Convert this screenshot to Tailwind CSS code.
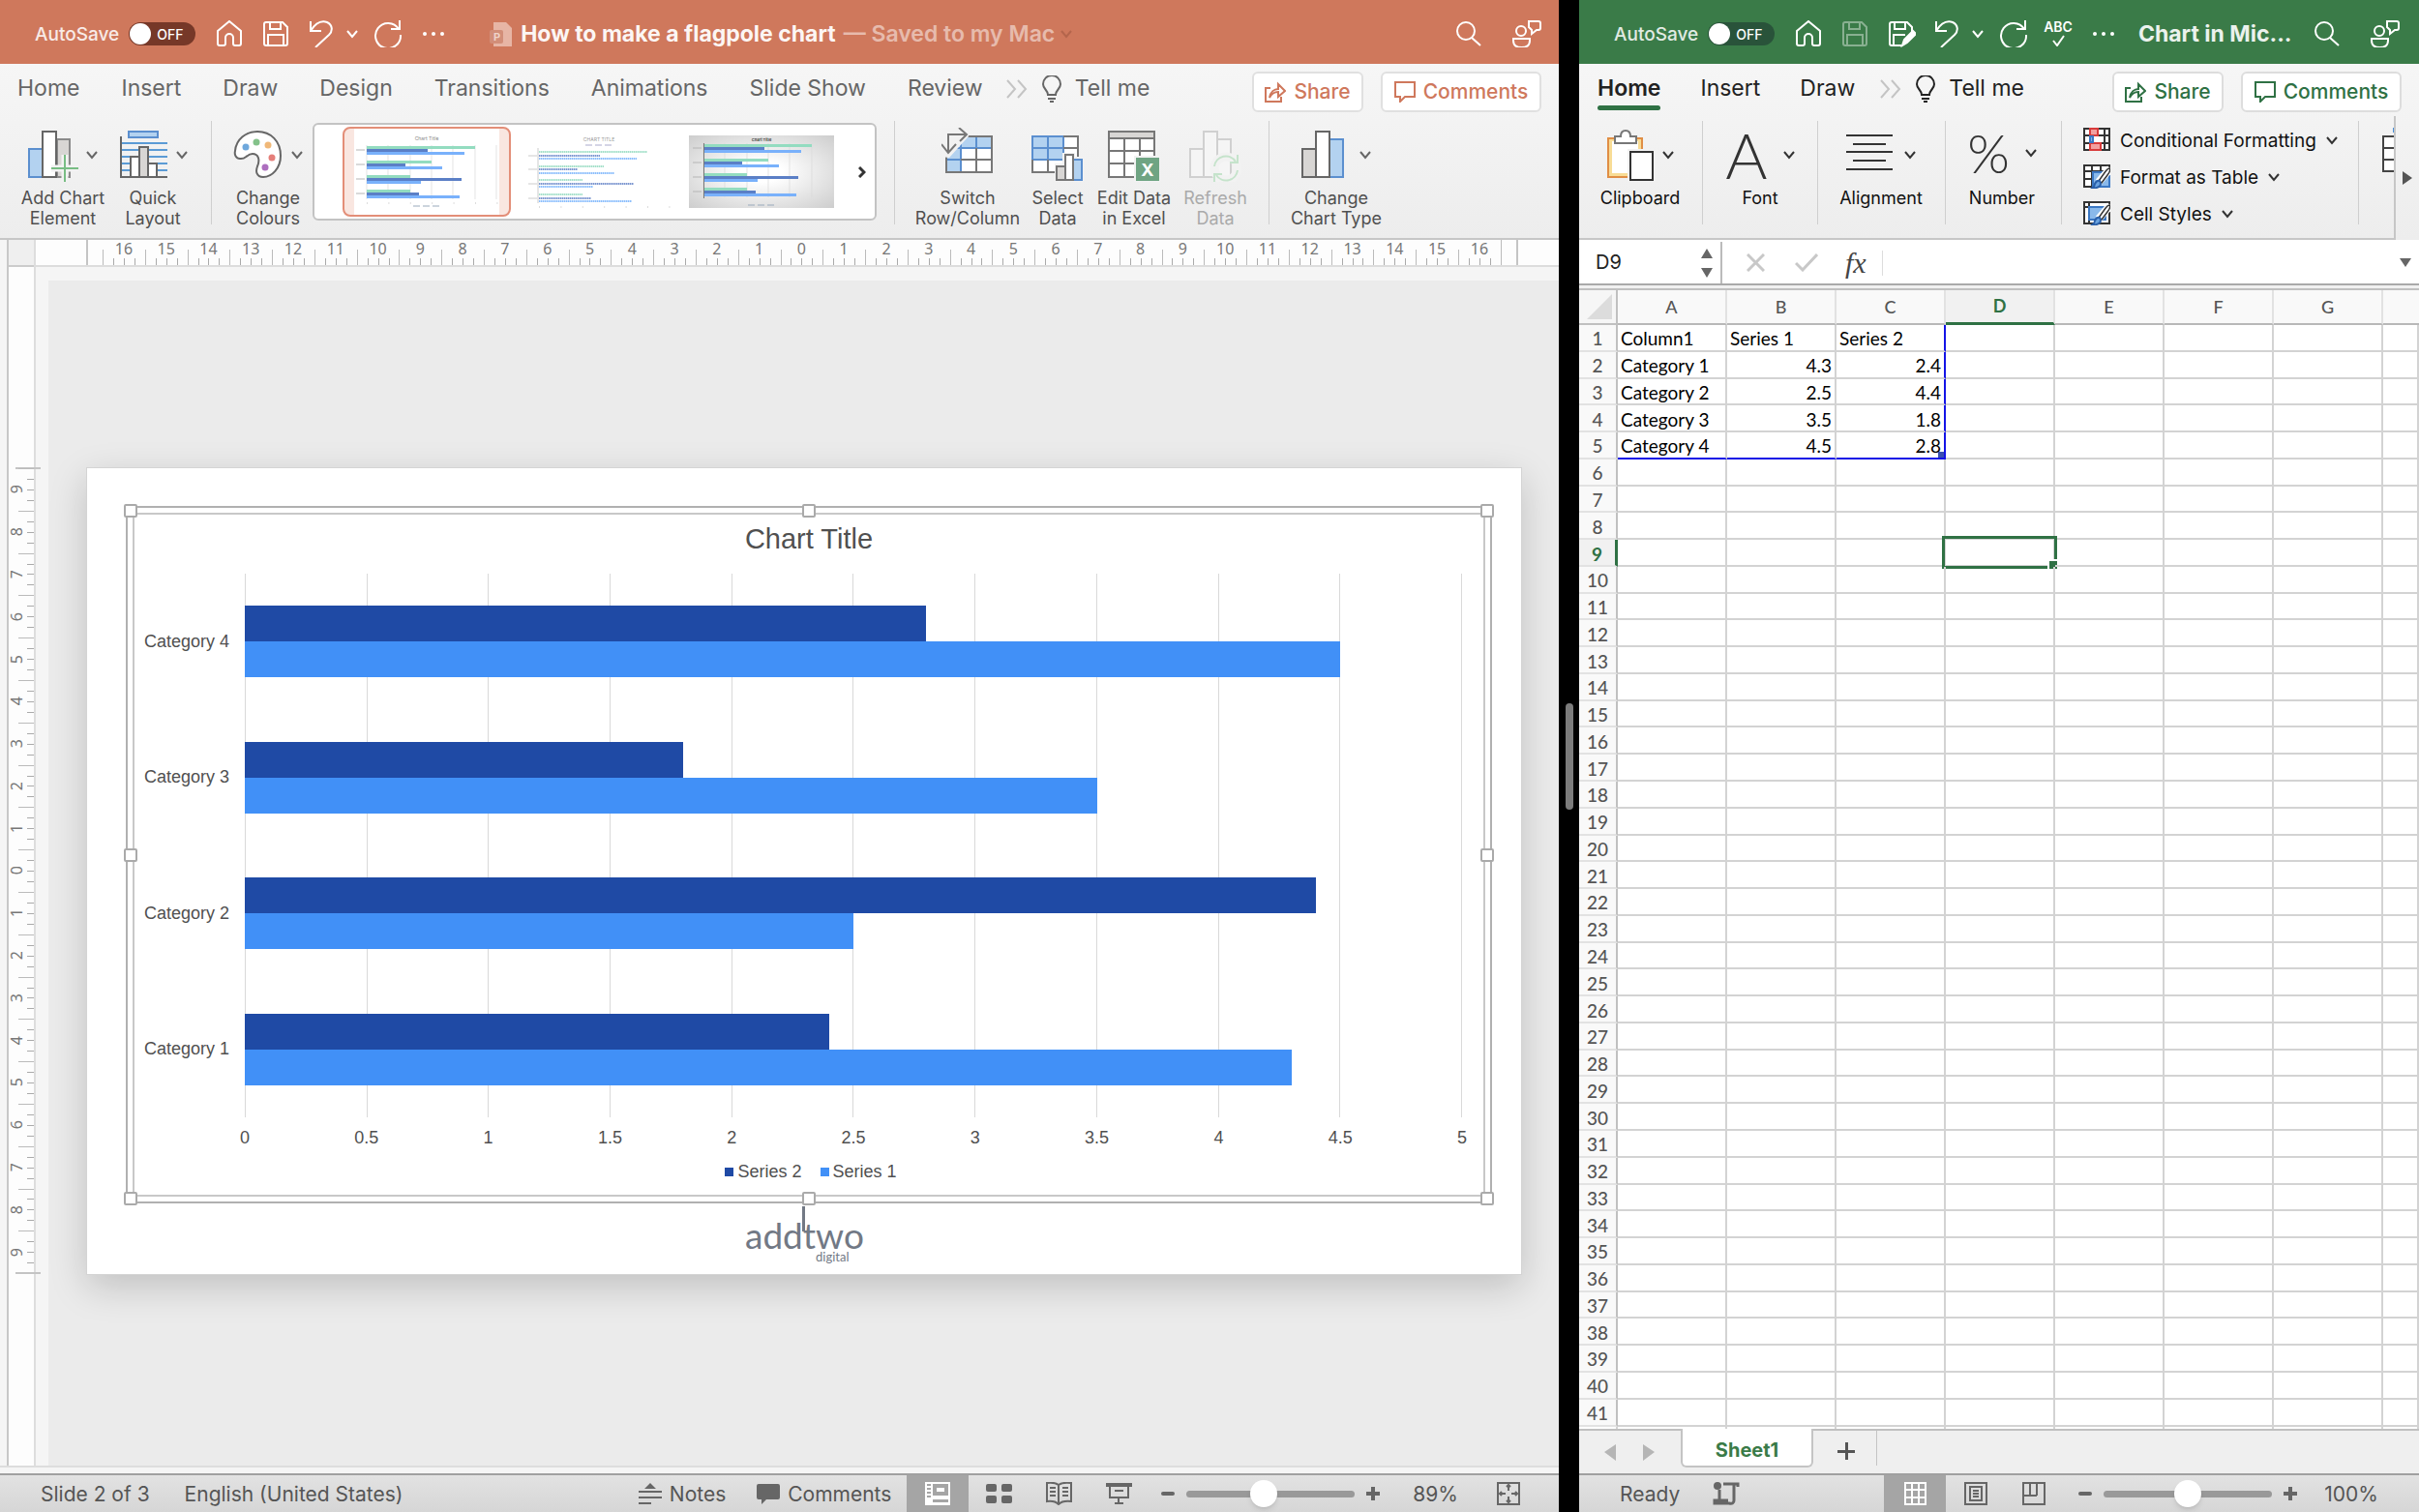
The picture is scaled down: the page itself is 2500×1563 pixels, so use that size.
<!DOCTYPE html>
<html lang="en">

<head>
  <meta charset="UTF-8" />
  <meta name="viewport" content="width=device-width, initial-scale=1.0" />
  <script src="https://cdn.jsdelivr.net/npm/@tailwindcss/browser@4"></script>
  <title>How to make a flagpole chart</title>
</head>

<body class="flex h-screen overflow-hidden bg-black font-['Inter','Liberation_Sans',sans-serif] text-[18px] leading-[21px]">

  <!-- Shared icons -->
  <svg class="hidden">
    <symbol id="i-home" viewBox="0 0 28 28"><path d="M1 11 13 1l12 10v13a2 2 0 0 1-2 2h-4a2 2 0 0 1-2-2v-6a4 4 0 0 0-8 0v6a2 2 0 0 1-2 2H3a2 2 0 0 1-2-2z" /></symbol>
    <symbol id="i-save" viewBox="0 0 28 28"><path d="M3 2h17l5 5v17a2 2 0 0 1-2 2H3a2 2 0 0 1-2-2V4a2 2 0 0 1 2-2zM7 2v7h11V2M5 26V15h16v11" /></symbol>
    <symbol id="i-saveas" viewBox="0 0 28 28"><path d="M13 26H3a2 2 0 0 1-2-2V4a2 2 0 0 1 2-2h16l5 5v5M6 2v7h11V2M5 26V15h12" /><path d="m14 26 2-6 9-9 3 3-9 9z" fill="currentColor" /></symbol>
    <symbol id="i-undo" viewBox="0 0 28 28"><path d="M1 1v10h11M1 11C6 3 12 0 18 2c6 3 6 9 2 13L6 28" /></symbol>
    <symbol id="i-redo" viewBox="0 0 30 28"><path d="M27 0v9h-9M26 9a13 13 0 1 0 2 6" /></symbol>
    <symbol id="i-search" viewBox="0 0 28 28"><circle cx="10" cy="11" r="9" /><path d="m16 18 9 8" /></symbol>
    <symbol id="i-people" viewBox="0 0 30 28"><circle cx="9" cy="11" r="5" /><path d="M1 19h17v2q0 7-8.500 7T1 21zM17 1h10q2 0 2 2v5q0 2-2 2h-2l-5 4v-4l-3-3V3q0-2 0-2z" /></symbol>
    <symbol id="i-chev" viewBox="0 0 12 9"><path d="m1 1 5 6 5-6" /></symbol>
    <symbol id="i-more" viewBox="0 0 24 20"><path d="m2 1 8 9-8 9M13 1l8 9-8 9" /></symbol>
    <symbol id="i-bulb" viewBox="0 0 20 28"><path d="M6 20c0-5-5-6-5-11a9 9 0 0 1 18 0c0 5-5 6-5 11zM6 24h8M8 27h4" /></symbol>
    <symbol id="i-share" viewBox="0 0 22 22"><path d="M6 7H1v14h16v-5M5 17c1-6 5-9 9-9V3l7 7-7 6v-5c-4 0-7 2-9 6z" /></symbol>
    <symbol id="i-comment" viewBox="0 0 22 22"><path d="M1 1h20v15H11l-5 5v-5H1z" /></symbol>
    <symbol id="i-brush" viewBox="0 0 28 24"><path fill="none" stroke="#fff" stroke-width="8" d="M28 3 16 17" /><path fill="#fff" stroke="#333" stroke-width="1.500" d="M27 3q2 2-2 7l-6 8-3-2 5-7q4-6 6-6z" /><path fill="#6aa3e0" stroke="#2a5fa8" d="M17 16q4 7-9 8 4-2 4-5 2-4 5-3z" /></symbol>
    <!-- bars of the style thumbnails -->
    <symbol id="thumb-bars" viewBox="0 0 150 58" overflow="visible">
      <path class="stroke-[#d9d9d9]" d="M0 0v56M22 0v56M45 0v56M67 0v56M89 0v56M112 0v56M134 0v56" stroke-width=".7" />
      <path fill="#93dcc0" d="M0 1h112v3H0zM0 16h67v3H0zM0 31h45v3H0zM0 46h45v3H0z" />
      <path fill="#5b7fc6" d="M0 4h63v3H0zM0 19h40v3H0zM0 34h98v3H0zM0 49h54v3H0z" />
      <path fill="#79b1fb" d="M0 7h101v3H0zM0 22h78v3H0zM0 37h56v3H0zM0 52h96v3H0z" />
      <path class="stroke-[#b5b5b5]" d="M-11 5h9M-11 20h9M-11 35h9M-11 50h9" stroke-width="1" />
    </symbol>
  </svg>

  <!-- PowerPoint -->
  <section class="flex min-w-0 flex-[1611] flex-col bg-[#f5f5f5]">
    <header class="flex h-[66px] shrink-0 items-center bg-[#cf785c] pt-1 pr-[18px] pl-9 text-white">
      <label class="flex items-center gap-2.5 text-[19px] font-medium text-white/85">AutoSave
        <input type="checkbox" class="sr-only" />
        <span class="flex h-6 w-[69px] items-center gap-1.5 rounded-full bg-[#763828] pl-px text-[14px] text-white"><span class="size-[22px] rounded-full bg-white"></span>OFF</span>
      </label>
      <div class="ml-[22px] flex items-center gap-5 fill-none stroke-white stroke-2">
        <button aria-label="Home"><svg class="size-7"><use href="#i-home" /></svg></button>
        <button aria-label="Save"><svg class="size-7"><use href="#i-save" /></svg></button>
        <button aria-label="Undo" class="flex items-center gap-2.5"><svg class="size-7"><use href="#i-undo" /></svg><svg class="h-[9px] w-3"><use href="#i-chev" /></svg></button>
        <button aria-label="Redo" class="-ml-1"><svg class="h-7 w-[30px]"><use href="#i-redo" /></svg></button>
        <button aria-label="More"><svg class="h-1 w-6 fill-white stroke-none"><circle cx="3" cy="2" r="2" /><circle cx="12" cy="2" r="2" /><circle cx="21" cy="2" r="2" /></svg></button>
      </div>
      <h1 class="ml-[46px] flex items-center text-[23px] font-bold text-white/95">
        <svg class="mr-2 h-[26px] w-6" viewBox="0 0 24 26"><path fill="#e7b5a5" d="M4 1h13l6 6v19H4z" /><rect y="9" width="14" height="14" rx="2" fill="#d28e79" /><text x="4" y="20" font-size="11" fill="#efd3c9">P</text></svg>
        How to make a flagpole chart<span class="ml-2 font-semibold text-white/50">— Saved to my Mac</span>
        <svg class="ml-1.5 h-[9px] w-3 fill-none stroke-[#b4654c] stroke-2"><use href="#i-chev" /></svg>
      </h1>
      <div class="ml-auto flex gap-[30px] fill-none stroke-white stroke-2">
        <button aria-label="Search"><svg class="size-7"><use href="#i-search" /></svg></button>
        <button aria-label="Account"><svg class="h-7 w-[30px]"><use href="#i-people" /></svg></button>
      </div>
    </header>

    <!-- Ribbon -->
    <div class="shrink-0 border-b-2 border-[#c6c6c6] bg-linear-to-b from-[#f6f6f6] to-[#ededed] text-[#505050]">
      <nav class="flex h-[54px] items-center gap-[43px] pr-[18px] pb-[3px] pl-[18px] text-[23px] text-[#666]">
        <button>Home</button>
        <button>Insert</button>
        <button>Draw</button>
        <button>Design</button>
        <button>Transitions</button>
        <button>Animations</button>
        <button>Slide Show</button>
        <button>Review</button>
        <button class="-ml-5 flex items-center gap-3.5"><svg class="h-5 w-6 fill-none stroke-[#c4c4c4] stroke-2"><use href="#i-more" /></svg><svg class="h-7 w-5 fill-none stroke-[#666] stroke-2"><use href="#i-bulb" /></svg><span>Tell me</span></button>
        <div class="ml-auto flex gap-[18px] pt-1.5 text-[21px] font-medium text-[#cf785c]">
          <button class="flex h-[42px] w-[115px] items-center justify-center gap-2 rounded-md border-2 border-[#e0e0e0] bg-white"><svg class="size-[22px] fill-none stroke-current stroke-2"><use href="#i-share" /></svg>Share</button>
          <button class="flex h-[42px] w-[166px] items-center justify-center gap-2 rounded-md border-2 border-[#e0e0e0] bg-white"><svg class="size-[22px] fill-none stroke-current stroke-2"><use href="#i-comment" /></svg>Comments</button>
        </div>
      </nav>

      <div class="flex h-[126px] items-start pl-5">
        <div class="mt-3 flex gap-3">
          <button class="flex w-[90px] flex-col items-center gap-1.5">
            <span class="flex items-center gap-2"><svg class="h-14 w-[52px] stroke-[#666] stroke-2" viewBox="0 0 52 56"><path fill="#b3d2f0" stroke="#5b8fcf" d="M1 22h14v29H1z" /><path fill="#d8d6d4" stroke="#8a8a8a" d="M30 12h13v39H30z" /><path fill="#fff" d="M15 4h14v47H15z" /><path fill="none" stroke="#f2f2f2" stroke-width="7" d="M38 28v28M24 42h28" /><path fill="none" stroke="#79bd84" d="M38 28v28M24 42h28" /></svg><svg class="h-[9px] w-3 fill-none stroke-[#666] stroke-2"><use href="#i-chev" /></svg></span>
            Add Chart<br>Element
          </button>
          <button class="flex w-[72px] flex-col items-center gap-1.5">
            <span class="flex items-center gap-2"><svg class="h-14 w-[52px] stroke-[#666] stroke-2" viewBox="0 0 52 56"><path stroke="#5b9bd5" d="M3 16h48M3 23h48M3 30h48M3 37h48M3 44h48" /><path fill="#b3d2f0" stroke="#5b8fcf" d="M11 4h30v6H11z" /><path fill="none" d="M3 9v42h48" /><path fill="#fff" d="M13 30h9v21h-9zM31 37h9v14h-9z" /><path fill="#d8d6d4" d="M22 20h9v31h-9z" /></svg><svg class="h-[9px] w-3 fill-none stroke-[#666] stroke-2"><use href="#i-chev" /></svg></span>
            Quick<br>Layout
          </button>
        </div>
        <div class="mt-[5px] ml-6 h-[107px] w-px bg-[#cfcfcf]"></div>
        <button class="mt-3 ml-[22px] flex w-[72px] flex-col items-center gap-1.5">
          <span class="flex items-center gap-2"><svg class="h-14 w-[52px]" viewBox="0 0 52 56"><path fill="#fff" stroke="#666" stroke-width="2" d="M25 4c14 0 24 10 24 25 0 13-9 22-18 22-7 0-8-6-6-11 3-7 1-13-5-13s-7 6-13 5c-4 0-6-4-5-8C3 12 13 4 25 4z" /><circle cx="13" cy="20" r="3.500" fill="#6fa8dc" /><circle cx="24" cy="15" r="3.500" fill="#84c28a" /><circle cx="36" cy="18" r="3.500" fill="#f0b878" /><circle cx="40" cy="31" r="3.500" fill="#e57f7a" /><circle cx="33" cy="41" r="3.500" fill="#ad6fbf" /></svg><svg class="h-[9px] w-3 fill-none stroke-[#666] stroke-2"><use href="#i-chev" /></svg></span>
          Change<br>Colours
        </button>

        <!-- Chart styles -->
        <div class="mt-[7px] ml-[10px] flex h-[101px] w-[583px] items-center rounded-md border-2 border-[#c3c3c3] bg-white pl-[29px]">
          <button aria-label="Style 1" class="h-[93px] w-[174px] rounded-lg border-2 border-[#e38e78] bg-[#f9e6e0] px-2.5">
            <svg class="h-full w-full bg-white" viewBox="0 0 150 89"><text x="75" y="12" text-anchor="middle" font-size="5" fill="#888">Chart Title</text><use href="#thumb-bars" x="13" y="17" width="150" height="58" /><path stroke="#bbb" stroke-dasharray="1 21.400" d="M13 77h136" /><path stroke="#9ab" stroke-dasharray="7 3" d="M61 80h29" /></svg>
          </button>
          <button aria-label="Style 2" class="ml-4">
            <svg class="h-[89px] w-[150px]" viewBox="0 0 150 89"><text x="75" y="13" text-anchor="middle" font-size="5" fill="#999">CHART TITLE</text><path stroke="#aac" stroke-dasharray="7 3" d="M61 17h29" /><g fill="none" stroke-width="2" stroke-dasharray="1.500 .5"><path stroke="#a5e0ca" d="M13 24h112M13 39h67M13 53h45M13 68h45" /><path stroke="#7d97d0" d="M13 28h63M13 42h40M13 57h98M13 72h54" /><path stroke="#8dbffc" d="M13 31h101M13 46h78M13 60h56M13 75h96" /></g><path stroke="#ccc" d="M12 20v57M2 28h9M2 42h9M2 57h9M2 72h9" /><path stroke="#bbb" stroke-dasharray="1 21.400" d="M13 81h136" /></svg>
          </button>
          <button aria-label="Style 3" class="ml-[18px] bg-radial from-white from-20% to-[#cdcdcd]">
            <svg class="h-[75px] w-[150px]" viewBox="0 0 150 75"><text x="75" y="6" text-anchor="middle" font-size="4" font-weight="bold" fill="#444">Chart Title</text><use href="#thumb-bars" x="15" y="8" width="150" height="58" /><path stroke="#777" d="M15.500 8v57" /><path stroke="#9ab" stroke-dasharray="7 3" d="M61 72h29" /></svg>
          </button>
          <button aria-label="More styles" class="mr-[9px] ml-auto"><svg class="h-3 w-2 fill-none stroke-[#333] stroke-3" viewBox="0 0 8 12"><path d="m1 1 5 5-5 5" /></svg></button>
        </div>

        <div class="mt-[5px] ml-[18px] h-[107px] w-px bg-[#cfcfcf]"></div>
        <div class="mt-3 ml-5 flex gap-2">
          <button class="flex w-[110px] flex-col items-center gap-1.5">
            <svg class="h-14 w-[54px] fill-none stroke-[#777] stroke-2" viewBox="0 0 54 56"><path fill="#fff" d="M5 9h47v37H5z" /><path fill="#b3d2f0" stroke="none" d="M5 9h47v12H20v25H5z" /><path stroke="#5b8fcf" d="M20 9v37M5 21h47M36 9v12M5 33h15" /><path d="M36 21v25M20 33h32M5 9h47v37H5z" /><path fill="#f2f2f2" stroke="none" d="M0 0h28v9L8 31 0 30z" /><path d="M7 25V7h18M18 0l8 7-7 7M0 17l7 9 8-9" /></svg>
            Switch<br>Row/Column
          </button>
          <button class="flex w-[60px] flex-col items-center gap-1.5">
            <svg class="h-14 w-[54px] fill-none stroke-[#777] stroke-2" viewBox="0 0 54 56"><path fill="#fff" d="M1 9h47v37H1z" /><path fill="#b3d2f0" stroke="#5b8fcf" d="M1 9h32v24H1zM17 9v24M1 21h32" /><path d="M17 33v13M33 21h15M33 9h15v37H1V33M33 33h15" /><path fill="#f2f2f2" stroke="none" d="M24 37h8V26h13v4h9v26H24z" /><path fill="#d8d6d4" d="M26 40h9v14h-9z" /><path fill="#b3d2f0" stroke="#5b8fcf" d="M43 33h9v21h-9z" /><path fill="#fff" d="M35 28h8v26h-8z" /></svg>
            Select<br>Data
          </button>
          <button class="flex w-[82px] flex-col items-center gap-1.5">
            <svg class="h-14 w-[54px] fill-none stroke-[#777] stroke-2" viewBox="0 0 54 56"><path fill="#fff" d="M1 4h47v47H1z" /><path fill="#d8d6d4" d="M1 4h47v7H1z" /><path d="M17 11v40M33 11v40M1 24h47M1 37h47" /><path fill="#6fa483" stroke="#f2f2f2" d="M28 30h26v26H28z" /><text x="41" y="50" text-anchor="middle" font-size="18" font-weight="bold" fill="#fff" stroke="none">X</text></svg>
            Edit Data<br>in Excel
          </button>
          <button class="flex w-[70px] flex-col items-center gap-1.5 text-[#aaa]">
            <svg class="h-14 w-[54px] fill-none stroke-[#d0d0d0] stroke-2" viewBox="0 0 54 56"><path fill="#f5f5f5" d="M1 22h14v29H1zM29 12h14v39H29zM15 4h14v47H15z" /><path stroke="#f2f2f2" stroke-width="9" d="M26 42a12 12 0 0 1 24 0 12 12 0 0 1-24 0" /><path stroke="#c5e3cb" d="M26 40a12 12 0 0 1 22-5M50 44a12 12 0 0 1-22 5M50 28v8h-8M26 56v-8h8" /></svg>
            Refresh<br>Data
          </button>
        </div>
        <div class="mt-[5px] ml-5 h-[107px] w-px bg-[#cfcfcf]"></div>
        <button class="mt-3 ml-5 flex w-[98px] flex-col items-center gap-1.5">
          <span class="flex items-center gap-2"><svg class="h-14 w-[52px] stroke-[#666] stroke-2" viewBox="0 0 52 56"><path fill="#d8d6d4" d="M1 22h14v29H1z" /><path fill="#b3d2f0" stroke="#5b8fcf" d="M29 12h14v39H29z" /><path fill="#fff" d="M15 4h14v47H15z" /></svg><svg class="h-[9px] w-3 fill-none stroke-[#666] stroke-2"><use href="#i-chev" /></svg></span>
          Change<br>Chart Type
        </button>
      </div>
    </div>

    <div class="flex min-h-0 flex-1 border-b-2 border-[#ddd]">
      <!-- Vertical ruler -->
      <div class="w-[9px] shrink-0 border-r-2 border-[#c8c8c8]"></div>
      <div class="w-7 shrink-0 border-r-2 border-[#ddd] bg-[#fdfdfd]">
        <div class="h-7 border-b-2 border-[#ccc] bg-[#efefef]"></div>
        <div id="vruler" class="relative mt-[208px] flex h-[832px] flex-col font-['Noto_Sans',sans-serif] text-[16px] leading-4 text-[#777]">
          <i class="absolute -top-px left-[7px] h-0.5 w-[26px] bg-[#c4c4c4]"></i>
          <i class="absolute -bottom-px left-[7px] h-0.5 w-[26px] bg-[#c4c4c4]"></i>
        </div>
      </div>
      <div class="flex min-w-0 flex-1 flex-col">
        <!-- Horizontal ruler -->
        <div class="h-7 shrink-0 border-b-2 border-[#ddd] bg-[#fdfdfd] pr-[42px] pl-[52px]">
          <div id="hruler" class="flex h-full border-x-2 border-[#c4c4c4] px-[15px] font-['Noto_Sans',sans-serif] text-[16px] leading-4 text-[#777]"></div>
        </div>
        <!-- Slide area -->
        <main class="mt-[14px] ml-[13px] flex-1 bg-[#ebebeb] pt-[193px] pr-[38px] pl-[39px]">
          <div class="relative aspect-[1484/835] w-full border border-[#d4d4d4] bg-white shadow-[0_12px_36px_rgba(0,0,0,0.18)]">
            <!-- Selected chart -->
            <div class="absolute top-[39px] right-[30px] bottom-[73px] left-10 border-2 border-[#b0b0b0] bg-white p-[5px]">
              <div class="flex h-full flex-col border-2 border-[#c8c8c8] pt-[9px] pr-[22px] pl-[114px] font-['Liberation_Sans',Arial,sans-serif] text-[18px] text-[#505050]">
                <h2 class="mr-[92px] text-center text-[29px] leading-8">Chart Title</h2>
                <div id="plot" class="relative mt-5 flex h-[562px] flex-col">
                  <div class="absolute inset-0 flex justify-between">
                    <i class="w-px bg-[#d9d9d9]"></i><i class="w-px bg-[#d9d9d9]"></i><i class="w-px bg-[#d9d9d9]"></i><i class="w-px bg-[#d9d9d9]"></i><i class="w-px bg-[#d9d9d9]"></i><i class="w-px bg-[#d9d9d9]"></i><i class="w-px bg-[#d9d9d9]"></i><i class="w-px bg-[#d9d9d9]"></i><i class="w-px bg-[#d9d9d9]"></i><i class="w-px bg-[#d9d9d9]"></i><i class="w-px bg-[#d9d9d9]"></i>
                  </div>
                </div>
                <div id="axis" class="mt-[11px] flex justify-between"></div>
                <div class="mt-3.5 mr-[88px] flex justify-center gap-[19px]">
                  <span class="flex items-center gap-1"><i class="size-[9px] bg-[#1f4aa5]"></i>Series 2</span>
                  <span class="flex items-center gap-1"><i class="size-[9px] bg-[#4190f7]"></i>Series 1</span>
                </div>
              </div>
              <i class="absolute -top-1 -left-1 size-3.5 rounded-xs border-2 border-[#aaa] bg-white"></i>
              <i class="absolute -top-1 left-1/2 size-3.5 -translate-x-1/2 rounded-xs border-2 border-[#aaa] bg-white"></i>
              <i class="absolute -top-1 -right-1 size-3.5 rounded-xs border-2 border-[#aaa] bg-white"></i>
              <i class="absolute top-1/2 -left-1 size-3.5 -translate-y-1/2 rounded-xs border-2 border-[#aaa] bg-white"></i>
              <i class="absolute top-1/2 -right-1 size-3.5 -translate-y-1/2 rounded-xs border-2 border-[#aaa] bg-white"></i>
              <i class="absolute -bottom-1 -left-1 size-3.5 rounded-xs border-2 border-[#aaa] bg-white"></i>
              <i class="absolute -bottom-1 left-1/2 size-3.5 -translate-x-1/2 rounded-xs border-2 border-[#aaa] bg-white"></i>
              <i class="absolute -right-1 -bottom-1 size-3.5 rounded-xs border-2 border-[#aaa] bg-white"></i>
            </div>
            <!-- Logo -->
            <svg class="absolute bottom-2 left-[680px] h-[64px] w-[126px] font-['Lato',sans-serif]" viewBox="0 0 126 64" fill="#727985"><text y="46" font-size="37">addtwo</text><path d="M59 2h3v26h-3z" /><text x="73" y="59" font-size="13">digital</text></svg>
          </div>
        </main>
      </div>
    </div>

    <!-- Status bar -->
    <footer class="mt-1.5 flex h-10 shrink-0 items-center border-t-2 border-[#a0a0a0] bg-linear-to-b from-[#e2e2e2] to-[#d6d6d6] pr-10 pl-[42px] text-[21px] text-[#555]">
      <span>Slide 2 of 3</span>
      <span class="ml-9">English (United States)</span>
      <button class="ml-auto flex items-center gap-2"><svg class="h-6 w-6 fill-[#666]" viewBox="0 0 24 24"><path d="M12 1l6 6H6zM0 9h24v2H0zM0 15h24v2H0zM0 21h13v2H0z" /></svg>Notes</button>
      <button class="ml-8 flex items-center gap-2"><svg class="h-6 w-6 fill-[#666]" viewBox="0 0 24 24"><path d="M2 2h20q2 0 2 2v12q0 2-2 2H10l-5 5v-5H2q-2 0-2-2V4q0-2 2-2z" /></svg>Comments</button>
      <button aria-label="Normal" class="ml-4 flex h-full w-16 items-center justify-center bg-[#a5a5a5]"><svg class="h-6 w-[26px]" viewBox="0 0 26 24"><path fill="#fff" d="M0 0h26v24H0z" /><path fill="#a5a5a5" d="M2 2h4v2H2zM2 6h4v2H2zM2 10h4v2H2zM2 14h4v2H2zM8 2h16v12H8zM8 18h16v3H8z" /><path fill="#fff" d="M12 6h8v4h-8z" /></svg></button>
      <div class="ml-[18px] flex items-center gap-[35px] fill-[#666] stroke-[#666]">
        <button aria-label="Slide sorter"><svg class="h-5 w-[27px] stroke-none" viewBox="0 0 27 20"><rect width="11" height="8" rx="2" /><rect x="16" width="11" height="8" rx="2" /><rect y="12" width="11" height="8" rx="2" /><rect x="16" y="12" width="11" height="8" rx="2" /></svg></button>
        <button aria-label="Reading view"><svg class="h-6 w-[27px] fill-none stroke-2" viewBox="0 0 27 24"><path d="M13 3Q9 0 1 1v19q8-1 12 3 4-4 13-3V1q-9-1-13 2zv20M4 6h6M4 10h6M4 14h6M17 6h6M17 10h6M17 14h6" /></svg></button>
        <button aria-label="Slide show"><svg class="h-6 w-[27px] fill-none stroke-2" viewBox="0 0 27 24"><path d="M1 2h25v2H1zM4 4v12h19V4M9 9h9M13 16v6M9 22h9" /></svg></button>
      </div>
      <button aria-label="Zoom out" class="ml-[30px] h-1 w-3.5 rounded bg-[#666]"></button>
      <input type="range" aria-label="Zoom" min="0" max="100" value="45" class="mx-3 h-[7px] w-[174px] appearance-none rounded-full bg-[#999] [&::-webkit-slider-thumb]:size-7 [&::-webkit-slider-thumb]:appearance-none [&::-webkit-slider-thumb]:rounded-full [&::-webkit-slider-thumb]:bg-white [&::-webkit-slider-thumb]:shadow-md" />
      <button aria-label="Zoom in"><svg class="size-3.5 fill-[#666]" viewBox="0 0 14 14"><path d="M5 0h4v5h5v4H9v5H5V9H0V5h5z" /></svg></button>
      <span class="ml-[34px]">89%</span>
      <button aria-label="Fit to window" class="ml-10"><svg class="size-6 fill-none stroke-[#666] stroke-2" viewBox="0 0 24 24"><path d="M1 1h22v22H1zM12 3v6M12 15v6M3 12h6M15 12h6M10 5l2-2 2 2M10 19l2 2 2-2M5 10l-2 2 2 2M19 10l2 2-2 2" /></svg></button>
    </footer>
  </section>

  <!-- Split handle -->
  <div class="flex w-[21px] shrink-0 items-center justify-center"><i class="h-[110px] w-2 rounded-full bg-[#7c7c7c]"></i></div>

  <!-- Excel -->
  <section class="flex min-w-0 flex-[868] flex-col bg-[#f1f1f1]">
    <header class="flex h-[66px] shrink-0 items-center bg-[#3a7b48] pt-1 pr-5 pl-9 text-white">
      <label class="flex items-center gap-2.5 text-[19px] font-medium text-white/85">AutoSave
        <input type="checkbox" class="sr-only" />
        <span class="flex h-6 w-[69px] items-center gap-1.5 rounded-full bg-[#29533a] pl-px text-[14px] text-white"><span class="size-[22px] rounded-full bg-white"></span>OFF</span>
      </label>
      <div class="ml-[22px] flex items-center gap-5 fill-none stroke-white stroke-2">
        <button aria-label="Home"><svg class="size-7"><use href="#i-home" /></svg></button>
        <button aria-label="Save" class="opacity-40"><svg class="size-7"><use href="#i-save" /></svg></button>
        <button aria-label="Save a copy"><svg class="size-7"><use href="#i-saveas" /></svg></button>
        <button aria-label="Undo" class="flex items-center gap-2.5"><svg class="size-7"><use href="#i-undo" /></svg><svg class="h-[9px] w-3"><use href="#i-chev" /></svg></button>
        <button aria-label="Redo" class="-ml-1"><svg class="h-7 w-[30px]"><use href="#i-redo" /></svg></button>
        <button class="-ml-1 flex flex-col items-center text-[14px] leading-3 font-semibold">ABC<svg class="mt-0.5 h-3 w-3.5" viewBox="0 0 14 12"><path d="m2 6 4 5 7-10" /></svg></button>
        <button aria-label="More"><svg class="h-1 w-6 fill-white stroke-none"><circle cx="3" cy="2" r="2" /><circle cx="12" cy="2" r="2" /><circle cx="21" cy="2" r="2" /></svg></button>
      </div>
      <h1 class="ml-6 text-[23px] font-bold whitespace-nowrap text-white/90">Chart in Mic...</h1>
      <div class="ml-auto flex gap-[30px] fill-none stroke-white stroke-2">
        <button aria-label="Search"><svg class="size-7"><use href="#i-search" /></svg></button>
        <button aria-label="Account"><svg class="h-7 w-[30px]"><use href="#i-people" /></svg></button>
      </div>
    </header>

    <!-- Ribbon -->
    <div class="shrink-0 bg-linear-to-b from-[#f6f6f6] to-[#ededed] text-[#111]">
      <nav class="flex h-[54px] items-center gap-[41px] pr-[18px] pb-[3px] pl-[19px] text-[23px] text-[#222]">
        <button class="relative font-semibold">Home<i class="absolute inset-x-0 -bottom-3 h-[5px] rounded-full bg-[#2f7144]"></i></button>
        <button>Insert</button>
        <button>Draw</button>
        <button class="-ml-4 flex items-center gap-3.5"><svg class="h-5 w-6 fill-none stroke-[#c4c4c4] stroke-2"><use href="#i-more" /></svg><svg class="h-7 w-5 fill-none stroke-[#222] stroke-2"><use href="#i-bulb" /></svg><span>Tell me</span></button>
        <div class="ml-auto flex gap-[18px] pt-1.5 text-[21px] font-medium text-[#2f7144]">
          <button class="flex h-[42px] w-[115px] items-center justify-center gap-2 rounded-md border-2 border-[#ddd] bg-white"><svg class="size-[22px] fill-none stroke-current stroke-2"><use href="#i-share" /></svg>Share</button>
          <button class="flex h-[42px] w-[166px] items-center justify-center gap-2 rounded-md border-2 border-[#ddd] bg-white"><svg class="size-[22px] fill-none stroke-current stroke-2"><use href="#i-comment" /></svg>Comments</button>
        </div>
      </nav>
      <div class="flex h-32 items-start">
        <div class="flex h-full min-w-0 flex-1 items-start overflow-hidden border-r-2 border-b-2 border-[#c6c6c6] pl-[21px]">
          <button class="mt-3 flex w-[84px] shrink-0 flex-col items-center gap-1.5">
            <span class="flex items-center gap-2"><svg class="h-14 w-[50px] stroke-[#555] stroke-2" viewBox="0 0 50 56"><path fill="#f8dc95" stroke="#e08e45" d="M2 11h35v40H2z" /><path fill="#fff" stroke="none" d="M6 14h27v33H6z" /><path fill="#fff" stroke="#777" d="M9 16V9h6q0-6 5-6t5 6h6v7z" /><path fill="#fff" stroke="#f2f2f2" stroke-width="6" d="M25 25h23v29H25z" /><path fill="#fff" stroke="#333" d="M25 25h23v29H25z" /></svg><svg class="h-[9px] w-3 fill-none stroke-[#333] stroke-2"><use href="#i-chev" /></svg></span>
            Clipboard
          </button>
          <div class="mt-[5px] ml-[22px] h-[107px] w-px bg-[#cfcfcf]"></div>
          <button class="mt-3 ml-5 flex w-[78px] shrink-0 flex-col items-center gap-1.5">
            <span class="flex h-14 items-center gap-4"><span class="font-['Lato',sans-serif] text-[66px] leading-[52px] font-light text-[#333]">A</span><svg class="h-[9px] w-3 fill-none stroke-[#333] stroke-2"><use href="#i-chev" /></svg></span>
            Font
          </button>
          <div class="mt-[5px] ml-5 h-[107px] w-px bg-[#cfcfcf]"></div>
          <button class="mt-3 ml-5 flex w-[90px] shrink-0 flex-col items-center gap-1.5">
            <span class="flex items-center gap-3"><svg class="h-14 w-12 stroke-[#333] stroke-2" viewBox="0 0 48 56"><path d="M0 8h48M7 17h34M0 25h48M7 34h34M0 43h48" /></svg><svg class="h-[9px] w-3 fill-none stroke-[#333] stroke-2"><use href="#i-chev" /></svg></span>
            Alignment
          </button>
          <div class="mt-[5px] ml-[21px] h-[107px] w-px bg-[#cfcfcf]"></div>
          <button class="mt-3 ml-[18px] flex w-[80px] shrink-0 flex-col items-center gap-1.5">
            <span class="flex h-14 items-center gap-4 pb-1"><span class="font-['Lato',sans-serif] text-[56px] leading-[52px] font-light text-[#333]">%</span><svg class="h-[9px] w-3 fill-none stroke-[#333] stroke-2"><use href="#i-chev" /></svg></span>
            Number
          </button>
          <div class="mt-[5px] ml-[21px] h-[107px] w-px bg-[#cfcfcf]"></div>
          <div class="mt-3 ml-[22px] flex shrink-0 flex-col gap-3 text-[19px]">
            <button class="flex items-center gap-2.5"><svg class="h-[26px] w-7 fill-white stroke-[#333] stroke-2" viewBox="0 0 28 26"><path d="M1 1h26v22H1zM7 1v22M22 1v22M1 8h26M1 16h26" /><path fill="#fff" stroke="none" d="M12 9h9v6h-9z" /><path fill="#f2a0a0" stroke="#d83b3b" d="M7 1h8v7H7zM7 16h11v7H7z" /><path fill="#7fb2e5" stroke="#3b78c4" d="M7 9h3v6H7z" /></svg>Conditional Formatting<svg class="h-[9px] w-3 fill-none stroke-[#333] stroke-2"><use href="#i-chev" /></svg></button>
            <button class="flex items-center gap-2.5"><svg class="h-[26px] w-7 fill-white stroke-[#333] stroke-2" viewBox="0 0 28 26"><path d="M1 1h26v22H1zM9 1v22M18 1v22M1 7h26M1 15h26" /><path fill="#8ab9ea" stroke="#3b78c4" d="M10 8h17v15H10z" /><use href="#i-brush" width="28" height="24" y="1" /></svg>Format as Table<svg class="h-[9px] w-3 fill-none stroke-[#333] stroke-2"><use href="#i-chev" /></svg></button>
            <button class="flex items-center gap-2.5"><svg class="h-[26px] w-7 fill-white stroke-[#333] stroke-2" viewBox="0 0 28 26"><path d="M1 1h26v22H1zM6 1v22M1 6h26" /><path fill="#8ab9ea" stroke="#3b78c4" d="M6 6h17v13H6z" /><use href="#i-brush" width="28" height="24" y="1" /></svg>Cell Styles<svg class="h-[9px] w-3 fill-none stroke-[#333] stroke-2"><use href="#i-chev" /></svg></button>
          </div>
          <div class="mt-[5px] ml-auto h-[107px] w-px shrink-0 bg-[#cfcfcf]"></div>
          <svg class="mt-3 ml-6 h-14 w-3 shrink-0 fill-white stroke-[#444] stroke-2" viewBox="0 0 12 56"><path d="M20 9H1v36h20M1 21h20M1 33h20" /><path stroke="#4a90d9" d="M12 0v5" /></svg>
        </div>
        <button aria-label="Scroll ribbon" class="flex h-full w-6 items-center justify-center"><svg class="h-3.5 w-2.5 fill-[#555]" viewBox="0 0 10 14"><path d="m0 0 10 7-10 7z" /></svg></button>
      </div>
    </div>

    <!-- Formula bar -->
    <div class="flex h-[47px] shrink-0 items-center border-b-2 border-[#aaa] bg-white pt-0.5">
      <div class="flex h-full w-[148px] items-center border-r-2 border-[#bbb] pr-2">
        <input type="text" aria-label="Name box" value="D9" class="w-full min-w-0 pl-[17px] text-[20px] text-[#222]" />
        <svg class="h-[30px] w-3 shrink-0 fill-[#666]" viewBox="0 0 12 30"><path d="m6 0 6 10H0zM6 30l6-10H0z" /></svg>
      </div>
      <button aria-label="Cancel" class="ml-[25px]"><svg class="size-[19px] fill-none stroke-[#c8c8c8] stroke-3" viewBox="0 0 19 19"><path d="m1 1 17 17M18 1 1 18" /></svg></button>
      <button aria-label="Enter" class="ml-[31px]"><svg class="h-[19px] w-6 fill-none stroke-[#c8c8c8] stroke-3" viewBox="0 0 24 19"><path d="m1 10 7 7L23 1" /></svg></button>
      <label for="formula" class="ml-7 font-['Liberation_Serif',serif] text-[30px] text-[#444] italic">fx</label>
      <div class="ml-4 h-[26px] w-px bg-[#ddd]"></div>
      <input id="formula" type="text" class="min-w-0 flex-1 px-3" />
      <svg class="mr-2 h-[9px] w-3 fill-[#666]" viewBox="0 0 12 9"><path d="M0 0h12L6 9z" /></svg>
    </div>

    <!-- Sheet -->
    <div class="mt-[3px] min-h-0 flex-1 overflow-hidden border-y-2 border-[#c0c0c0] bg-white">
      <table class="h-full w-full table-fixed border-separate border-spacing-0 font-['Lato',sans-serif] text-[19px] leading-[23px] text-black">
        <thead>
          <tr class="h-9 text-[18px] text-[#555]">
            <th class="w-10 border-r-2 border-b-2 border-[#c0c0c0] bg-[#f6f6f6] p-0"><svg class="mr-1 ml-auto h-[26px] w-[26px] fill-[#dcdcdc]" viewBox="0 0 26 26"><path d="M26 0v26H0z" /></svg></th>
            <th class="w-[113px] border-r-2 border-b-2 border-r-[#e2e2e2] border-b-[#b8b8b8] bg-[#f9f9f9] p-0 font-medium">A</th>
            <th class="w-[113px] border-r-2 border-b-2 border-r-[#e2e2e2] border-b-[#b8b8b8] bg-[#f9f9f9] p-0 font-medium">B</th>
            <th class="w-[113px] border-r-2 border-b-2 border-r-[#e2e2e2] border-b-[#b8b8b8] bg-[#f9f9f9] p-0 font-medium">C</th>
            <th class="w-[113px] border-r-2 border-b-3 border-r-[#e2e2e2] border-b-[#2f7144] bg-[#f1f1f1] p-0 font-bold text-[#2f7144]">D</th>
            <th class="w-[113px] border-r-2 border-b-2 border-r-[#e2e2e2] border-b-[#b8b8b8] bg-[#f9f9f9] p-0 font-medium">E</th>
            <th class="w-[113px] border-r-2 border-b-2 border-r-[#e2e2e2] border-b-[#b8b8b8] bg-[#f9f9f9] p-0 font-medium">F</th>
            <th class="w-[113px] border-r-2 border-b-2 border-r-[#e2e2e2] border-b-[#b8b8b8] bg-[#f9f9f9] p-0 font-medium">G</th>
            <th class="border-b-2 border-[#b8b8b8] bg-[#f9f9f9] p-0"></th>
          </tr>
        </thead>
        <tbody id="rows"></tbody>
      </table>
    </div>

    <!-- Sheet tabs -->
    <div class="flex h-11 shrink-0 items-start bg-[#efefef] pl-[26px]">
      <div class="mt-3.5 flex gap-7">
        <button aria-label="Previous sheet"><svg class="h-[17px] w-3 fill-[#b5b5b5]" viewBox="0 0 12 17"><path d="M12 0v17L0 8z" /></svg></button>
        <button aria-label="Next sheet"><svg class="h-[17px] w-3 fill-[#b5b5b5]" viewBox="0 0 12 17"><path d="M0 0v17l12-9z" /></svg></button>
      </div>
      <button class="-mt-0.5 ml-[27px] h-10 w-[137px] rounded-b-md border-x-2 border-b-2 border-[#c4c4c4] bg-white pt-1.5 text-[20px] font-bold text-[#3a7b48]">Sheet1</button>
      <button aria-label="New sheet" class="mt-3 ml-[25px]"><svg class="size-[18px] fill-[#555]" viewBox="0 0 18 18"><path d="M8 0h3v8h7v3h-7v7H8v-7H0V8h8z" /></svg></button>
      <div class="ml-[22px] h-9 w-px bg-[#c4c4c4]"></div>
    </div>

    <!-- Status bar -->
    <footer class="flex h-10 shrink-0 items-center border-t-2 border-[#a0a0a0] bg-linear-to-b from-[#e2e2e2] to-[#d6d6d6] pr-[42px] pl-[42px] text-[21px] text-[#555]">
      <span>Ready</span>
      <button aria-label="Record macro" class="ml-[34px]"><svg class="h-6 w-7 fill-none stroke-[#666] stroke-3" viewBox="0 0 28 24"><path d="M11 2h15v3M22 2v17q0 4-5 3H2v-3h14M7 8v11" /><circle cx="5" cy="4" r="4" fill="#666" stroke="none" /></svg></button>
      <button aria-label="Normal view" class="ml-auto flex h-full w-16 items-center justify-center bg-[#a5a5a5]"><svg class="h-6 w-[23px] fill-none stroke-white stroke-2" viewBox="0 0 23 24"><path d="M1 1h21v22H1zM8 1v22M15 1v22M1 8h21M1 16h21" /></svg></button>
      <div class="ml-[19px] flex items-center gap-9 fill-none stroke-[#666] stroke-2">
        <button aria-label="Page layout"><svg class="size-6" viewBox="0 0 24 24"><path d="M1 1h22v22H1zM6 5h12v14H6zM9 9h6M9 12h6M9 15h6" /></svg></button>
        <button aria-label="Page break preview"><svg class="size-6" viewBox="0 0 24 24"><path d="M1 1h22v22H1zM8 1v13M15 1v13M1 14h14" /></svg></button>
      </div>
      <button aria-label="Zoom out" class="ml-[34px] h-1 w-3.5 rounded bg-[#666]"></button>
      <input type="range" aria-label="Zoom" min="0" max="100" value="50" class="mx-3 h-[7px] w-[174px] appearance-none rounded-full bg-[#999] [&::-webkit-slider-thumb]:size-7 [&::-webkit-slider-thumb]:appearance-none [&::-webkit-slider-thumb]:rounded-full [&::-webkit-slider-thumb]:bg-white [&::-webkit-slider-thumb]:shadow-md" />
      <button aria-label="Zoom in"><svg class="size-3.5 fill-[#666]" viewBox="0 0 14 14"><path d="M5 0h4v5h5v4H9v5H5V9H0V5h5z" /></svg></button>
      <span class="ml-7">100%</span>
    </footer>
  </section>

  <script>
    // chart data, shared by the slide and the sheet
    const data = [
      ['Category 1', 4.3, 2.4],
      ['Category 2', 2.5, 4.4],
      ['Category 3', 3.5, 1.8],
      ['Category 4', 4.5, 2.8],
    ];

    const plot = document.getElementById('plot');
    [...data].reverse().forEach(([name, s1, s2]) => {
      plot.insertAdjacentHTML('beforeend', `
        <div class="relative flex flex-1 flex-col justify-center">
          <span class="absolute right-full mr-4 whitespace-nowrap">${name}</span>
          <div class="h-[37px] bg-[#1f4aa5]" style="width:${s2 / 5 * 100}%"></div>
          <div class="h-[37px] bg-[#4190f7]" style="width:${s1 / 5 * 100}%"></div>
        </div>`);
    });

    const axis = document.getElementById('axis');
    for (let v = 0; v <= 5; v += 0.5) {
      axis.insertAdjacentHTML('beforeend', `<span class="flex w-0 justify-center">${v}</span>`);
    }

    // rulers, in centimetres from the middle
    const hruler = document.getElementById('hruler');
    for (let n = -16; n <= 16; n++) {
      hruler.insertAdjacentHTML('beforeend', `
        <div class="relative flex flex-1 justify-center pt-px ${n === 16 ? 'border-r border-[#bbb]' : ''}">${Math.abs(n)}
          <i class="absolute bottom-0 left-0 h-4 w-px bg-[#bbb]"></i>
          <i class="absolute bottom-0 left-1/4 h-[7px] w-px bg-[#aaa]"></i>
          <i class="absolute bottom-0 left-1/2 h-[7px] w-px bg-[#aaa]"></i>
          <i class="absolute bottom-0 left-3/4 h-[7px] w-px bg-[#aaa]"></i>
        </div>`);
    }
    const vruler = document.getElementById('vruler');
    for (let n = -9; n <= 9; n++) {
      vruler.insertAdjacentHTML('beforeend', `
        <div class="relative flex flex-1 items-center"><span class="rotate-180 [writing-mode:vertical-rl]">${Math.abs(n)}</span>
          <i class="absolute top-0 right-0 h-px w-4 bg-[#bbb]"></i>
          <i class="absolute top-1/4 right-0 h-px w-[7px] bg-[#aaa]"></i>
          <i class="absolute top-1/2 right-0 h-px w-[7px] bg-[#aaa]"></i>
          <i class="absolute top-3/4 right-0 h-px w-[7px] bg-[#aaa]"></i>
        </div>`);
    }

    // sheet rows
    const sheet = [['Column1', 'Series 1', 'Series 2'], ...data];
    const tbody = document.getElementById('rows');
    for (let r = 1; r <= 41; r++) {
      const values = sheet[r - 1] || ['', '', ''];
      const head = r === 9
        ? 'border-r-3 border-b-2 border-r-[#2f7144] border-b-[#e2e2e2] bg-[#f1f1f1] p-0 pt-0.5 font-bold text-[#2f7144]'
        : 'border-r-2 border-b-2 border-r-[#c0c0c0] border-b-[#e2e2e2] bg-[#f9f9f9] p-0 pt-0.5 font-medium text-[#555]';
      let html = `<th class="${head}">${r}</th>`;
      for (let c = 0; c < 8; c++) {
        const v = values[c] ?? '';
        const right = c === 2 && r <= 5 ? 'border-r-2 border-r-[#1414e6]' : 'border-r-2 border-r-[#d3d3d3]';
        const bottom = c <= 2 && r === 5 ? 'border-b-2 border-b-[#1414e6]' : 'border-b-2 border-b-[#d3d3d3]';
        const align = typeof v === 'number' ? 'pr-[3px] text-right' : 'pl-[3px] text-left';
        const cursor = r === 9 && c === 3
          ? '<i class="absolute -inset-1 border-3 border-[#2f7144]"></i><i class="absolute -right-1.5 -bottom-1.5 size-3 border-2 border-white bg-[#2f7144]"></i>' : '';
        const corner = r === 5 && c === 2 ? '<i class="absolute right-0 bottom-0 size-1.5 bg-[#3a4fb0]"></i>' : '';
        html += `<td class="relative pt-0.5 pb-0 whitespace-nowrap ${right} ${bottom} ${align}">${typeof v === 'number' ? v.toFixed(1) : v}${cursor}${corner}</td>`;
      }
      tbody.insertAdjacentHTML('beforeend', `<tr>${html}</tr>`);
    }
    tbody.insertAdjacentHTML('beforeend', `<tr class="h-0.5">${'<td class="border-r-2 border-[#d3d3d3] p-0"></td>'.repeat(9)}</tr>`);
  </script>

</body>

</html>
